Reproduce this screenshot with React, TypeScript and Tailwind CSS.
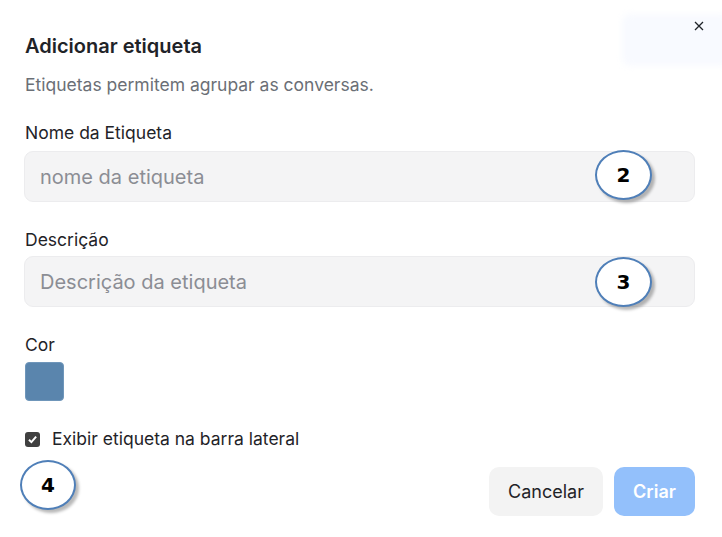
import React from "react";

function Badge({ n, className }: { n: string; className: string }) {
  return (
    <div
      className={
        "absolute flex items-center justify-center rounded-[50%] border-2 border-[#4f7fb8] bg-white text-[20px] font-bold text-black shadow-[3px_3px_3px_rgba(0,0,0,0.28)] " +
        className
      }
      style={{ fontFamily: '"DejaVu Sans", "Open Sans", sans-serif' }}
    >
      {n}
    </div>
  );
}

export default function App() {
  return (
    <div
      className="relative h-[537px] w-[722px] overflow-hidden bg-white text-[#1f2328]"
      style={{ fontFamily: 'Inter, "Noto Sans", sans-serif' }}
    >
      {/* faint background ghost */}
      <div className="absolute left-[622px] top-[14px] h-[52px] w-[110px] rounded-lg bg-[#f8faff] blur-[3px]" />

      <button className="absolute right-[14px] top-[17px] flex h-[18px] w-[18px] items-center justify-center text-[#1f2328]">
        <svg width="10" height="10" viewBox="0 0 10 10" fill="none" stroke="currentColor" strokeWidth="1.3">
          <path d="M1 1L9 9M9 1L1 9" />
        </svg>
      </button>

      <div className="flex flex-col pl-[24px] pr-[27px] pt-[32px]">
        <h2 className="ml-[1px] text-[20px] font-semibold leading-[28px] text-[#1f2328]">Adicionar etiqueta</h2>
        <p className="ml-[1px] mt-[13px] text-[17.5px] leading-[24px] text-[#6b6f76]">
          Etiquetas permitem agrupar as conversas.
        </p>

        <label className="ml-[1px] mt-[24px] text-[17.5px] leading-[24px]">Nome da Etiqueta</label>
        <div className="mt-[6px] flex h-[51px] items-center rounded-[9px] border border-[#ececee] bg-[#f4f4f5] px-[15px]">
          <span className="text-[20px] text-[#8b8d94]">nome da etiqueta</span>
        </div>

        <label className="ml-[1px] mt-[26px] text-[17.5px] leading-[24px]">Descrição</label>
        <div className="mt-[4px] flex h-[51px] items-center rounded-[9px] border border-[#ececee] bg-[#f4f4f5] px-[15px]">
          <span className="text-[20px] text-[#8b8d94]">Descrição da etiqueta</span>
        </div>

        <label className="ml-[1px] mt-[26px] text-[17.5px] leading-[24px]">Cor</label>
        <div className="ml-[1px] mt-[5px] h-[39px] w-[39px] rounded-[4px] border border-[#6f96ba] bg-[#5a85ad]" />

        <div className="mt-[26px] flex h-[24px] items-center">
          <span className="ml-[1px] flex h-[15px] w-[15px] items-center justify-center rounded-[3px] bg-[#404040]">
            <svg width="11" height="11" viewBox="0 0 10 10" fill="none" stroke="white" strokeWidth="1.8">
              <path d="M1.8 5.2L4 7.4L8.3 2.4" />
            </svg>
          </span>
          <span className="ml-[12px] text-[17.5px] leading-[24px]">Exibir etiqueta na barra lateral</span>
        </div>

        <div className="mt-[16px] flex justify-end gap-[11px]">
          <button className="flex h-[49px] w-[114px] items-center justify-center rounded-[10px] bg-[#f3f3f3] text-[18px] text-[#1f2328]">
            Cancelar
          </button>
          <button className="flex h-[49px] w-[81px] items-center justify-center rounded-[10px] bg-[#93c0fb] text-[18px] font-semibold text-white">
            Criar
          </button>
        </div>
      </div>

      <Badge n="2" className="left-[595px] top-[150px] h-[50px] w-[57px]" />
      <Badge n="3" className="left-[595px] top-[257px] h-[50px] w-[57px]" />
      <Badge n="4" className="left-[20px] top-[460px] h-[50px] w-[56px]" />
    </div>
  );
}
